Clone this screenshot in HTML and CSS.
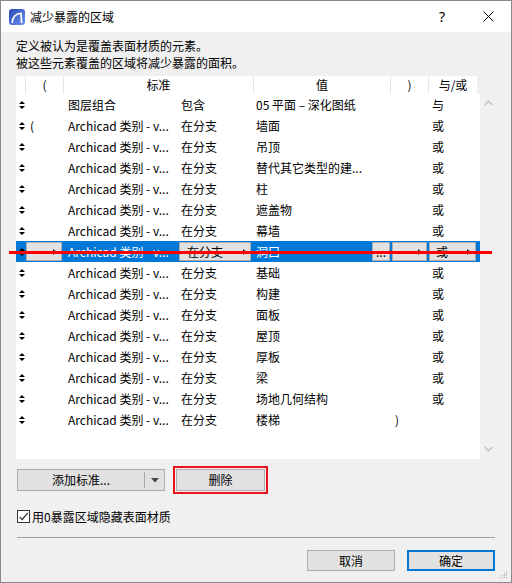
FILE: index.html
```html
<!DOCTYPE html>
<html lang="zh-CN">
<head>
<meta charset="utf-8">
<title>减少暴露的区域</title>
<link rel="stylesheet" href="styles.css">
</head>
<body>
<div class="window">
  <div class="titlebar">
    <svg class="logo" width="16" height="16" viewBox="0 0 16 16">
      <defs>
        <linearGradient id="lg" x1="0" y1="0" x2="1" y2="1">
          <stop offset="0" stop-color="#2547b5"/>
          <stop offset="1" stop-color="#6f93ec"/>
        </linearGradient>
      </defs>
      <rect x="0" y="0" width="16" height="16" rx="3" fill="url(#lg)"/>
      <path d="M3.2 14 C3.6 8 7 4.4 12 4.4 L12.6 14" fill="none" stroke="#fff" stroke-width="1.7"/>
    </svg>
    <span class="title">减少暴露的区域</span>
    <span class="spacer"></span>
    <span class="capbtn help">?</span>
    <span class="capbtn close">
      <svg width="11" height="11" viewBox="0 0 11 11"><path d="M0.5 0.5 L10.5 10.5 M10.5 0.5 L0.5 10.5" stroke="#000" stroke-width="1"/></svg>
    </span>
  </div>

  <div class="content">
    <div class="desc">
      <div>定义被认为是覆盖表面材质的元素。</div>
      <div>被这些元素覆盖的区域将减少暴露的面积。</div>
    </div>

    <div class="table">
      <div class="grid">
        <div class="header">
          <span class="h"></span>
          <span class="h">(</span>
          <span class="h">标准</span>
          <span class="h">值</span>
          <span class="h">)</span>
          <span class="h last">与/或</span>
        </div>
        <div class="body">
          <div class="row"><span class="c sort"><svg width="6" height="8" viewBox="0 0 6 8"><path d="M0 3 L3 0 L6 3Z M0 5 L3 8 L6 5Z"/></svg></span><span class="c p"></span><span class="c crit">图层组合</span><span class="c cond">包含</span><span class="c val">05 平面 – 深化图纸</span><span class="c q"></span><span class="c op">与</span><span></span></div>
          <div class="row"><span class="c sort"><svg width="6" height="8" viewBox="0 0 6 8"><path d="M0 3 L3 0 L6 3Z M0 5 L3 8 L6 5Z"/></svg></span><span class="c p">(</span><span class="c crit">Archicad 类别 - v...</span><span class="c cond">在分支</span><span class="c val">墙面</span><span class="c q"></span><span class="c op">或</span><span></span></div>
          <div class="row"><span class="c sort"><svg width="6" height="8" viewBox="0 0 6 8"><path d="M0 3 L3 0 L6 3Z M0 5 L3 8 L6 5Z"/></svg></span><span class="c p"></span><span class="c crit">Archicad 类别 - v...</span><span class="c cond">在分支</span><span class="c val">吊顶</span><span class="c q"></span><span class="c op">或</span><span></span></div>
          <div class="row"><span class="c sort"><svg width="6" height="8" viewBox="0 0 6 8"><path d="M0 3 L3 0 L6 3Z M0 5 L3 8 L6 5Z"/></svg></span><span class="c p"></span><span class="c crit">Archicad 类别 - v...</span><span class="c cond">在分支</span><span class="c val">替代其它类型的建...</span><span class="c q"></span><span class="c op">或</span><span></span></div>
          <div class="row"><span class="c sort"><svg width="6" height="8" viewBox="0 0 6 8"><path d="M0 3 L3 0 L6 3Z M0 5 L3 8 L6 5Z"/></svg></span><span class="c p"></span><span class="c crit">Archicad 类别 - v...</span><span class="c cond">在分支</span><span class="c val">柱</span><span class="c q"></span><span class="c op">或</span><span></span></div>
          <div class="row"><span class="c sort"><svg width="6" height="8" viewBox="0 0 6 8"><path d="M0 3 L3 0 L6 3Z M0 5 L3 8 L6 5Z"/></svg></span><span class="c p"></span><span class="c crit">Archicad 类别 - v...</span><span class="c cond">在分支</span><span class="c val">遮盖物</span><span class="c q"></span><span class="c op">或</span><span></span></div>
          <div class="row"><span class="c sort"><svg width="6" height="8" viewBox="0 0 6 8"><path d="M0 3 L3 0 L6 3Z M0 5 L3 8 L6 5Z"/></svg></span><span class="c p"></span><span class="c crit">Archicad 类别 - v...</span><span class="c cond">在分支</span><span class="c val">幕墙</span><span class="c q"></span><span class="c op">或</span><span></span></div>
          <div class="row selected">
            <span class="c sort"><svg width="6" height="8" viewBox="0 0 6 8"><path d="M0 3 L3 0 L6 3Z M0 5 L3 8 L6 5Z"/></svg></span>
            <span class="c p"><span class="dd dd-p"><span class="tri"></span></span></span>
            <span class="c crit">Archicad 类别 - v...</span>
            <span class="c cond"><span class="dd dd-cond"><span class="ddt">在分支</span><span class="tri"></span></span></span>
            <span class="c val valsel"><span>洞口</span><span class="dots">...</span></span>
            <span class="c q"><span class="dd dd-q"><span class="tri"></span></span></span>
            <span class="c op"><span class="dd dd-op"><span class="ddt">或</span><span class="tri"></span></span></span>
            <span></span>
          </div>
          <div class="row"><span class="c sort"><svg width="6" height="8" viewBox="0 0 6 8"><path d="M0 3 L3 0 L6 3Z M0 5 L3 8 L6 5Z"/></svg></span><span class="c p"></span><span class="c crit">Archicad 类别 - v...</span><span class="c cond">在分支</span><span class="c val">基础</span><span class="c q"></span><span class="c op">或</span><span></span></div>
          <div class="row"><span class="c sort"><svg width="6" height="8" viewBox="0 0 6 8"><path d="M0 3 L3 0 L6 3Z M0 5 L3 8 L6 5Z"/></svg></span><span class="c p"></span><span class="c crit">Archicad 类别 - v...</span><span class="c cond">在分支</span><span class="c val">构建</span><span class="c q"></span><span class="c op">或</span><span></span></div>
          <div class="row"><span class="c sort"><svg width="6" height="8" viewBox="0 0 6 8"><path d="M0 3 L3 0 L6 3Z M0 5 L3 8 L6 5Z"/></svg></span><span class="c p"></span><span class="c crit">Archicad 类别 - v...</span><span class="c cond">在分支</span><span class="c val">面板</span><span class="c q"></span><span class="c op">或</span><span></span></div>
          <div class="row"><span class="c sort"><svg width="6" height="8" viewBox="0 0 6 8"><path d="M0 3 L3 0 L6 3Z M0 5 L3 8 L6 5Z"/></svg></span><span class="c p"></span><span class="c crit">Archicad 类别 - v...</span><span class="c cond">在分支</span><span class="c val">屋顶</span><span class="c q"></span><span class="c op">或</span><span></span></div>
          <div class="row"><span class="c sort"><svg width="6" height="8" viewBox="0 0 6 8"><path d="M0 3 L3 0 L6 3Z M0 5 L3 8 L6 5Z"/></svg></span><span class="c p"></span><span class="c crit">Archicad 类别 - v...</span><span class="c cond">在分支</span><span class="c val">厚板</span><span class="c q"></span><span class="c op">或</span><span></span></div>
          <div class="row"><span class="c sort"><svg width="6" height="8" viewBox="0 0 6 8"><path d="M0 3 L3 0 L6 3Z M0 5 L3 8 L6 5Z"/></svg></span><span class="c p"></span><span class="c crit">Archicad 类别 - v...</span><span class="c cond">在分支</span><span class="c val">梁</span><span class="c q"></span><span class="c op">或</span><span></span></div>
          <div class="row"><span class="c sort"><svg width="6" height="8" viewBox="0 0 6 8"><path d="M0 3 L3 0 L6 3Z M0 5 L3 8 L6 5Z"/></svg></span><span class="c p"></span><span class="c crit">Archicad 类别 - v...</span><span class="c cond">在分支</span><span class="c val">场地几何结构</span><span class="c q"></span><span class="c op">或</span><span></span></div>
          <div class="row"><span class="c sort"><svg width="6" height="8" viewBox="0 0 6 8"><path d="M0 3 L3 0 L6 3Z M0 5 L3 8 L6 5Z"/></svg></span><span class="c p"></span><span class="c crit">Archicad 类别 - v...</span><span class="c cond">在分支</span><span class="c val">楼梯</span><span class="c q">)</span><span class="c op"></span><span></span></div>
        </div>
      </div>
      <div class="scrollbar">
        <svg width="9" height="6" viewBox="0 0 9 6"><path d="M0.8 5 L4.5 1.3 L8.2 5" fill="none" stroke="#c2c2c2" stroke-width="1.6"/></svg>
        <svg width="9" height="6" viewBox="0 0 9 6"><path d="M0.8 1 L4.5 4.7 L8.2 1" fill="none" stroke="#c2c2c2" stroke-width="1.6"/></svg>
      </div>
    </div>

    <div class="actions">
      <div class="btn split">
        <span class="split-main">添加标准...</span>
        <span class="split-div"></span>
        <span class="split-arrow"><svg width="8" height="5" viewBox="0 0 8 5"><path d="M0 0 L8 0 L4 4.5Z" fill="#444"/></svg></span>
      </div>
      <div class="btn del">删除</div>
    </div>

    <div class="check">
      <span class="box"><svg width="11" height="11" viewBox="0 0 11 11"><path d="M1.5 5.8 L4.2 8.5 L9.8 1.8" fill="none" stroke="#333" stroke-width="1.2"/></svg></span>
      <span class="label">用0暴露区域隐藏表面材质</span>
    </div>

    <div class="sep"></div>

    <div class="footer">
      <div class="btn fbtn">取消</div>
      <div class="btn fbtn ok">确定</div>
    </div>
  </div>

  <div class="redline"></div>
  <svg class="grip" width="8" height="8" viewBox="0 0 8 8">
    <rect x="6" y="0" width="1" height="1" fill="#aaa"/>
    <rect x="4" y="2" width="1" height="1" fill="#aaa"/><rect x="6" y="2" width="1" height="1" fill="#aaa"/>
    <rect x="2" y="4" width="1" height="1" fill="#aaa"/><rect x="4" y="4" width="1" height="1" fill="#aaa"/><rect x="6" y="4" width="1" height="1" fill="#aaa"/>
    <rect x="0" y="6" width="1" height="1" fill="#aaa"/><rect x="2" y="6" width="1" height="1" fill="#aaa"/><rect x="4" y="6" width="1" height="1" fill="#aaa"/><rect x="6" y="6" width="1" height="1" fill="#aaa"/>
  </svg>
</div>
</body>
</html>
```
FILE: styles.css
```css
* { box-sizing: border-box; }
html, body { margin: 0; padding: 0; }
body {
  width: 512px;
  height: 583px;
  overflow: hidden;
  background: #f0f0f0;
  font-family: "Noto Sans CJK SC", "Noto Sans", sans-serif;
  font-size: 12px;
  color: #000;
}
.window {
  position: relative;
  width: 512px;
  height: 583px;
  border: 1px solid #8a8a8a;
  background: #f0f0f0;
  display: flex;
  flex-direction: column;
}
.titlebar {
  height: 31px;
  flex: none;
  background: #fff;
  display: flex;
  align-items: center;
  padding-left: 8px;
}
.logo { display: block; flex: none; }
.title { margin-left: 5px; line-height: 16px; }
.spacer { flex: 1; }
.capbtn {
  width: 46px;
  height: 31px;
  display: flex;
  align-items: center;
  justify-content: center;
}
.help { font-family: "Noto Sans", sans-serif; font-size: 14px; }
.close svg { display: block; }

.content {
  flex: 1;
  padding: 0 15px;
  display: flex;
  flex-direction: column;
}
.desc { margin-top: 5px; line-height: 17px; }

.table {
  margin-top: 5px;
  height: 383px;
  display: flex;
}
.grid { width: 464px; display: flex; flex-direction: column; }
.header {
  width: 461px;
  height: 18px;
  background: #fff;
  display: grid;
  grid-template-columns: 10px 38px 190px 137px 38px 48px;
}
.h {
  border-right: 1px solid #e5e5e5;
  text-align: center;
  line-height: 18px;
}
.h.last { border-right: none; }
.body { flex: 1; background: #fff; }
.row {
  height: 21px;
  display: grid;
  grid-template-columns: 10px 37px 114px 76px 137px 38px 49px 3px;
  align-items: center;
}
.c { line-height: 21px; white-space: nowrap; overflow: hidden; height: 21px; }
.sort { display: flex; align-items: center; padding-left: 3px; }
.sort svg { display: block; fill: #000; }
.p { padding-left: 4px; }
.crit { padding-left: 5px; }
.cond { padding-left: 4px; }
.val { padding-left: 3px; }
.q { padding-left: 5px; }
.op { padding-left: 4px; }

.selected { background: #0078d7; color: #fff; }
.selected .c { padding-left: 0; display: flex; align-items: center; }
.selected .sort { padding-left: 3px; }
.selected .crit { padding-left: 5px; }
.selected .valsel { padding-left: 3px; justify-content: space-between; }
.dd {
  height: 19px;
  background: #e1e1e1;
  border: 1px solid #adadad;
  color: #000;
  display: flex;
  align-items: center;
  justify-content: space-between;
  line-height: 17px;
}
.dd-p { width: 36px; margin-left: 0; justify-content: flex-end; padding-right: 4px; }
.dd-cond { width: 72px; margin-left: 2px; padding: 0 3px 0 7px; }
.dd-q { width: 35px; margin-left: 2px; justify-content: flex-end; padding-right: 4px; }
.dd-op { width: 47px; margin-left: 1px; padding: 0 4px 0 6px; }
.tri {
  width: 0;
  height: 0;
  border-top: 3px solid transparent;
  border-bottom: 3px solid transparent;
  border-left: 4px solid #222;
}
.dots {
  width: 18px;
  height: 19px;
  background: #e1e1e1;
  border: 1px solid #adadad;
  color: #000;
  text-align: center;
  line-height: 17px;
}

.scrollbar {
  width: 16px;
  padding: 24px 0 7px;
  display: flex;
  flex-direction: column;
  align-items: center;
  justify-content: space-between;
}
.scrollbar svg { display: block; }

.actions {
  margin-top: 10px;
  height: 22px;
  display: flex;
}
.btn {
  background: #e1e1e1;
  border: 1px solid #adadad;
  display: flex;
  align-items: center;
  justify-content: center;
  line-height: 16px;
}
.split {
  margin-left: 1px;
  width: 148px;
  justify-content: flex-start;
}
.split-main { width: 126px; text-align: center; }
.split-div { width: 1px; height: 16px; background: #a8a8a8; }
.split-arrow { flex: 1; display: flex; justify-content: center; }
.split-arrow svg { display: block; }
.del {
  margin-left: 11px;
  width: 89px;
  outline: 2px solid #e8141c;
  outline-offset: 1px;
}

.check {
  margin-top: 19px;
  height: 13px;
  display: flex;
  align-items: center;
}
.box {
  margin-left: 1px;
  width: 13px;
  height: 13px;
  border: 1px solid #333;
  background: #fff;
  display: flex;
  align-items: center;
  justify-content: center;
}
.box svg { display: block; }
.label { margin-left: 2px; line-height: 13px; }

.sep {
  margin: 14px 1px 0;
  height: 1px;
  background: #a0a0a0;
}

.footer {
  margin-top: 12px;
  display: flex;
  justify-content: flex-end;
  gap: 12px;
  padding-right: 1px;
}
.fbtn { width: 88px; height: 21px; }
.ok { border: 2px solid #0078d7; }

.redline {
  position: absolute;
  left: 8px;
  top: 250px;
  width: 483px;
  height: 3px;
  background: #f00;
}
.grip {
  position: absolute;
  right: 3px;
  bottom: 3px;
}
```
